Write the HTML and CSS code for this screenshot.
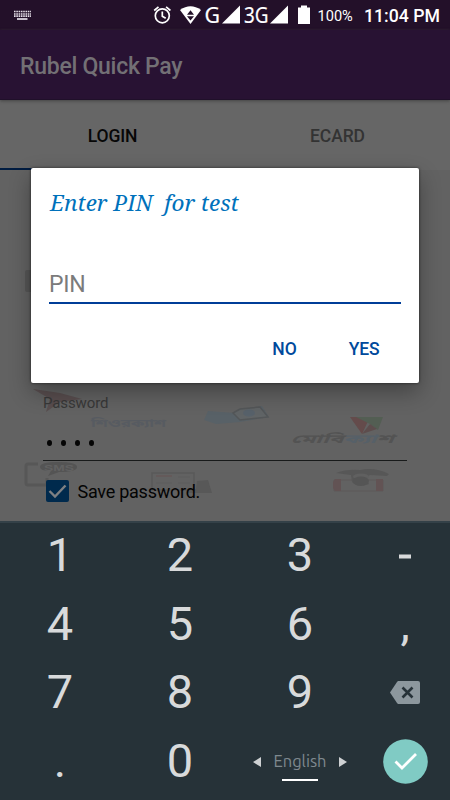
FILE: index.html
```html
<!DOCTYPE html>
<html lang="en">
<head>
<meta charset="utf-8">
<title>Rubel Quick Pay</title>
<link rel="stylesheet" href="styles.css">
</head>
<body>
<div class="screen">
  <header class="status">
    <svg class="status-icons" width="312" height="30" viewBox="0 0 312 30">
      <g fill="none" stroke="#e6dfe9" stroke-width="1.7">
        <path d="M14 11.5H31M14 14H31M14 16.2H31" stroke-dasharray="1.6 .7"/>
        <path d="M17 19H27.5"/>
      </g>
      <g fill="none" stroke="#fff" stroke-width="1.7">
        <circle cx="162.3" cy="15.8" r="7"/>
        <path d="M154.2 10.5L158.5 6.9M170.4 10.5L166.1 6.9M162.3 11.5V16.2L165.7 18.3"/>
      </g>
      <path fill="#fff" d="M180 10Q190.500 2.500 201 10L190.500 24Z"/>
      <path fill="#231129" d="M187 14.700L190.500 10.200L194 14.700ZM187 16.300H194L190.500 20.500Z"/>
      <path fill="#fff" d="M222 23.500L240 5.500V23.500ZM270 23.500L288 5.500V23.500ZM298 7.500H301V5.500H307V7.500H310V24H298Z"/>
      <text class="net" x="204.500" y="23.300" textLength="15.500" lengthAdjust="spacingAndGlyphs">G</text>
      <text class="net" x="244" y="23.300" textLength="24.500" lengthAdjust="spacingAndGlyphs">3G</text>
    </svg>
    <span class="battery">100%</span>
    <span class="clock">11:04 PM</span>
  </header>
  <div class="toolbar"><h1>Rubel Quick Pay</h1></div>
  <nav class="tabs">
    <div class="tab active">LOGIN</div>
    <div class="tab">ECARD</div>
  </nav>
  <main class="page">
    <svg class="backdrop" width="450" height="351" viewBox="0 170 450 351">
      <path d="M31 270H27Q25 270 25 272V290Q25 292 27 292H31Z" fill="#565656"/>
      <path d="M33 389L60 393L82 399L60 402L46 412L50 399Z" fill="#594e4f"/>
      <path d="M204 420L208 411L235 413L240 410L262 406L269 417L240 422L216 424Z" fill="#586167"/>
      <path d="M233 413L240 409L260 407L268 417L240 420Z" fill="#606466" stroke="#535658" stroke-width="1.500"/>
      <ellipse cx="249" cy="413" rx="6" ry="3.500" fill="#57616a"/>
      <path d="M350 417H370L362 434Z" fill="#644b4b"/>
      <path d="M356 417H383L378 430L370 424Z" fill="#535e53"/>
      <path d="M370 424L377 429L362 434Z" fill="#5d4d4d"/>
      <text class="brand" x="91" y="427" fill="#575b61" textLength="75" lengthAdjust="spacingAndGlyphs" font-size="10.500">শিওরক্যাশ</text>
      <text class="brand slanted" x="290.500" y="442.500" fill="#535353" textLength="103" lengthAdjust="spacingAndGlyphs" font-size="12">মোবি<tspan fill="#566068">ক্যা</tspan>শ</text>
      <path d="M38 464H28Q26 464 26 466V483Q26 485 28 485H47V478" fill="none" stroke="#575757" stroke-width="3"/>
      <path d="M40 467Q40 462 58 462Q77 462 77 467Q77 472 59 472L48 476L51 471Q40 471 40 467Z" fill="#545454"/>
      <text x="44" y="470.500" fill="#626262" class="sms" textLength="30" lengthAdjust="spacingAndGlyphs">SMS</text>
      <path d="M152 473H194V490H152Z" fill="none" stroke="#595959" stroke-width="1.500"/>
      <path d="M156 476H172" stroke="#645a5a" stroke-width="2"/>
      <path d="M178 477H190M156 483H172M178 483H190" stroke="#5c5c5c"/>
      <path d="M197 481L208 480L212 493H188V489H196Z" fill="#585858"/>
      <path d="M334 480H383V491H334Z" fill="none" stroke="#5c5959" stroke-width="1"/>
      <path d="M335 479H341V491H335L333 488V482ZM376 479H383V491H376Z" fill="#625354"/>
      <path d="M336 473Q347 469 360 470Q375 467 389 474L387 476L370 475Q363 478 369 484Q358 489 352 482L351 475Z" fill="#575757"/>
      <ellipse cx="361" cy="476.500" rx="8" ry="3" fill="#606060"/>
      <ellipse cx="361" cy="481" rx="8" ry="4.500" fill="#555"/>
    </svg>
    <form class="login">
      <div class="label">Password</div>
      <div class="secret"><i></i><i></i><i></i><i></i></div>
      <div class="save">
        <svg width="23" height="23" viewBox="0 0 23 23"><rect width="23" height="22" rx="2" fill="#002a4d"/><path d="M3.500 11L9 16.500L19.500 5.500" fill="none" stroke="#7e8083" stroke-width="2.400"/></svg>
        <span>Save password.</span>
      </div>
    </form>
  </main>
  <section class="keypad">
    <div class="key">1</div><div class="key">2</div><div class="key">3</div><div class="key minus"><svg width="12" height="5"><rect width="12" height="4" y=".5" fill="#d8dadb"/></svg></div>
    <div class="key">4</div><div class="key">5</div><div class="key">6</div><div class="key">,</div>
    <div class="key">7</div><div class="key">8</div><div class="key">9</div>
    <div class="key"><svg width="30" height="24" viewBox="0 0 30 24"><path d="M8 1H28Q30 1 30 3V22Q30 24 28 24H8L7 23L0 12.500L7 2Z" fill="#8c979d"/><path d="M12.500 7.500L22.500 17.500M22.500 7.500L12.500 17.500" stroke="#263238" stroke-width="2.600"/></svg></div>
    <div class="key">.</div><div class="key">0</div>
    <div class="key language">
      <svg width="8" height="10"><path d="M8 0V10L0 5Z" fill="#ced1d3"/></svg>
      <span class="name">English</span>
      <svg width="8" height="10"><path d="M0 0V10L8 5Z" fill="#ced1d3"/></svg>
    </div>
    <div class="key enter"><svg width="45" height="45" viewBox="0 0 45 45"><circle cx="22.500" cy="22.500" r="22.300" fill="#80cbc4"/><path d="M12.500 22.500L19 29L33 15" fill="none" stroke="#fff" stroke-width="2.800"/></svg></div>
  </section>
  <div class="dialog">
    <h2>Enter PIN&nbsp; for test</h2>
    <div class="pin">PIN</div>
    <div class="actions"><span>NO</span><span>YES</span></div>
  </div>
</div>
</body>
</html>
```

FILE: styles.css
```css
* { box-sizing: border-box; }
body { margin: 0; font-family: Roboto, "Liberation Sans", sans-serif; }
.screen { position: relative; width: 450px; height: 800px; overflow: hidden; background: #626262; display: flex; flex-direction: column; }
.status { height: 30px; background: #231029; display: flex; align-items: center; color: #fff; white-space: nowrap; }
.status-icons { flex: none; }
.net { font: 22px "Noto Sans", sans-serif; fill: #fff; stroke: #fff; stroke-width: .2px; }
.battery { font-size: 14.6px; margin-left: 5.5px; width: 46.5px; padding-top: 2px; }
.clock { font-size: 17.7px; font-weight: 500; padding-top: 1px; }
.toolbar { height: 70px; background: #281233; border-bottom: 1px solid #20102a; padding-left: 20px; display: flex; align-items: center; box-shadow: 0 1px 3px #444; z-index: 1; }
h1 { margin: 4px 0 0; font-size: 23px; letter-spacing: -.27px; font-weight: 500; color: #737075; }
.tabs { height: 70px; display: flex; background: #666; }
.tab { flex: 1; display: flex; align-items: center; justify-content: center; padding-top: 3px; font-size: 17.5px; letter-spacing: -.1px; font-weight: 500; color: #333; border-bottom: 2px solid transparent; }
.active { color: #070707; border-bottom-color: #001c41; }
.page { height: 351px; position: relative; }
.backdrop { position: absolute; left: 0; top: 0; }
.brand { font-family: "Noto Sans Bengali", "Noto Sans", sans-serif; font-weight: 700; }
.slanted { font-style: italic; }
.sms { font: bold 9px "Liberation Sans", sans-serif; }
.login { position: relative; padding: 223px 43px 0; }
.label { font-size: 15px; line-height: 20px; color: #383838; letter-spacing: -.1px; }
.secret { height: 48px; border-bottom: 1px solid #181a1a; display: flex; gap: 9px; padding: 27px 0 0 4px; }
.secret i { width: 5px; height: 6px; border-radius: 50%; background: #050505; }
.save { display: flex; align-items: center; gap: 8.5px; margin: 19px 0 0 3px; height: 23px; font-size: 18px; letter-spacing: -.25px; color: #040404; }
.keypad { flex: 1; display: grid; grid-template-columns: 120px 120px 120px 90px; grid-template-rows: repeat(4, 68.7px); border-top: 2px solid #344148; background: #263238; }
.key { display: flex; align-items: center; justify-content: center; padding-bottom: 5px; font-size: 47px; line-height: 62px; color: #d8dadb; }
.minus { padding-bottom: 1px; }
.enter { padding-bottom: 3px; }
.language { gap: 12px; padding-bottom: 3px; }
.name { font-family: Ubuntu, "Noto Sans", sans-serif; font-size: 16.5px; line-height: 26px; color: #7f898f; height: 39px; padding-top: 6px; background: linear-gradient(#fff, #fff) center bottom / 36px 2px no-repeat; }
.dialog { position: absolute; z-index: 2; left: 31px; top: 168px; width: 388px; height: 215px; background: #fff; border-radius: 2px; padding: 18px 18px 0; box-shadow: 0 9px 22px rgba(0,0,0,.32), 0 0 3px rgba(0,0,0,.6); }
h2 { margin: 0; font: italic 22.5px/34px "Noto Serif", "Droid Serif", "DejaVu Serif", serif; color: #0071bb; padding-left: 1px; }
.pin { margin-top: 46px; height: 38px; border-bottom: 2px solid #003e98; font-size: 23px; letter-spacing: -.3px; line-height: 37px; color: #7b7b7b; }
.actions { display: flex; justify-content: flex-end; gap: 52px; padding: 34px 21.5px 0 0; font-size: 17.5px; letter-spacing: -.1px; line-height: 22px; font-weight: 500; color: #004a9c; }
```
